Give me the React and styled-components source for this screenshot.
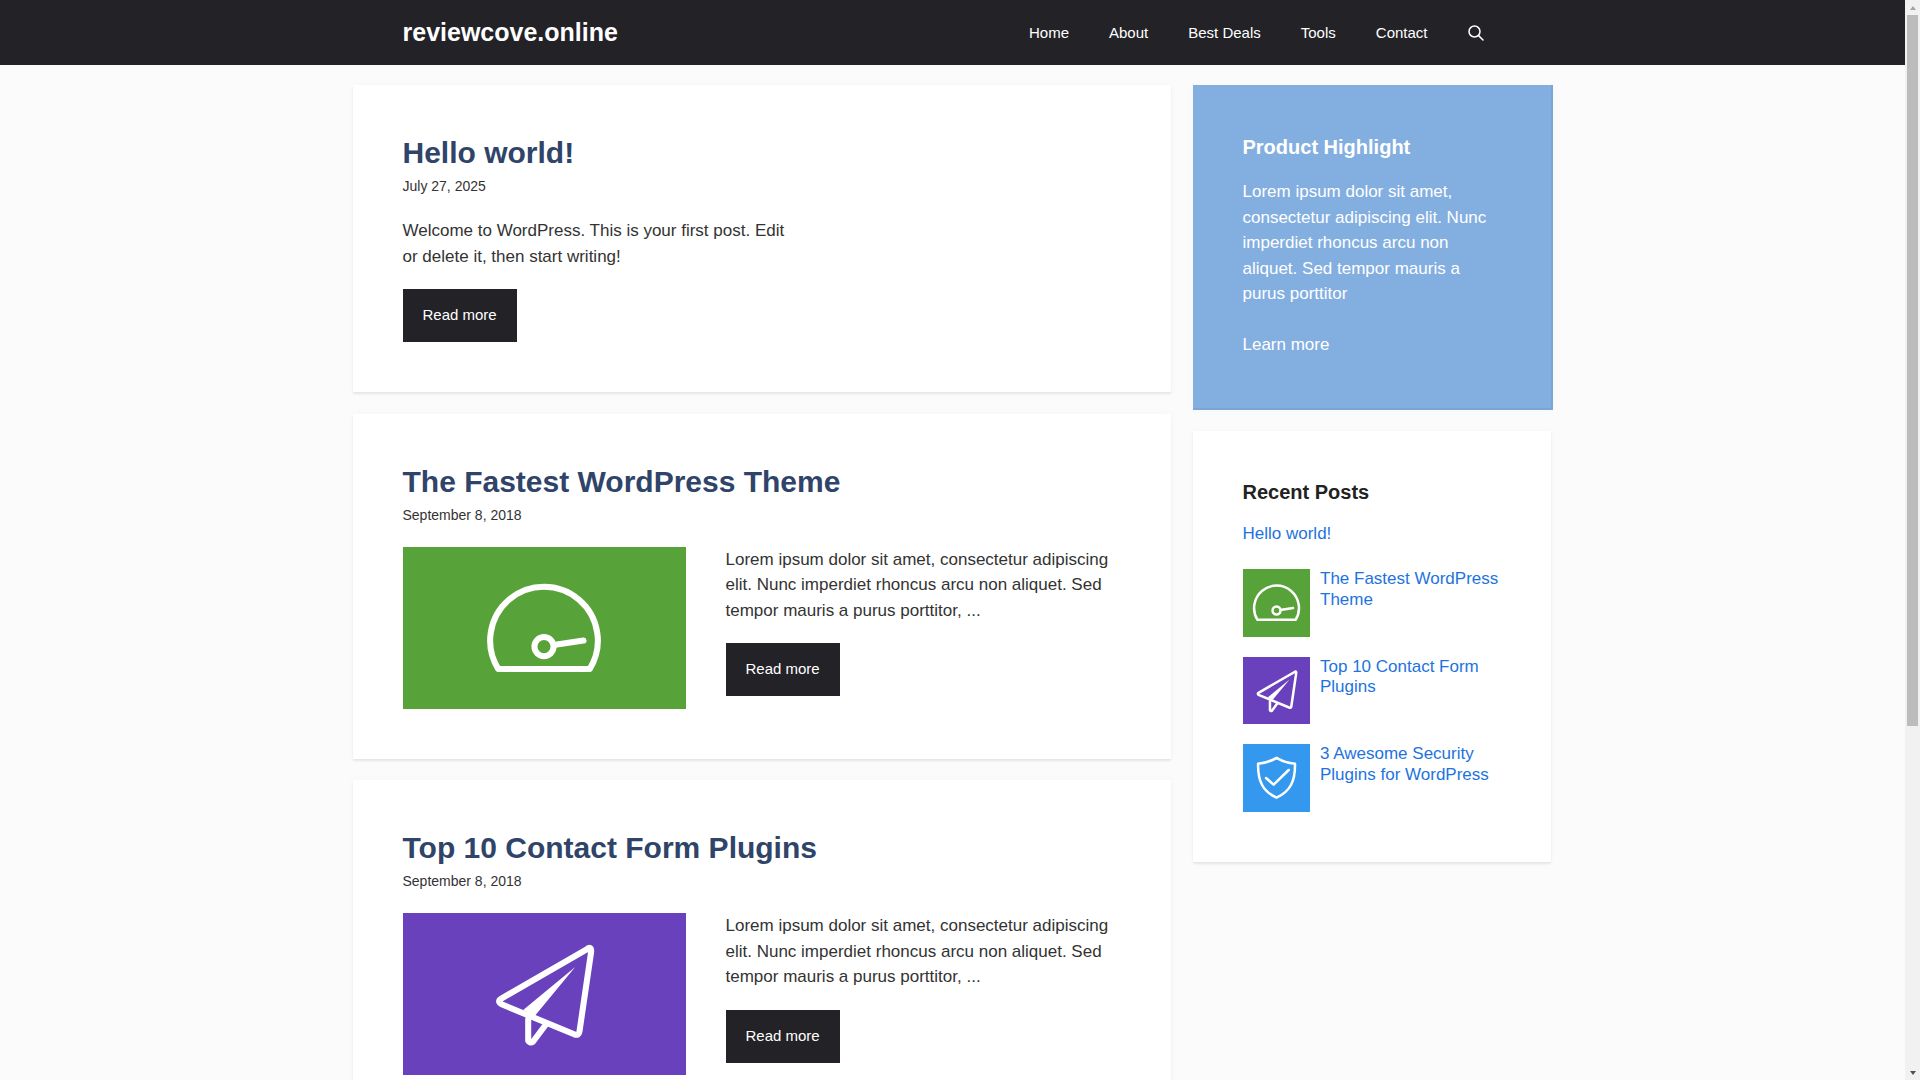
import * as React from "react";
import styled, { createGlobalStyle } from "styled-components";

const COLORS = {
    dark: "#222227",
    page: "#fbfbfb",
    text: "#333333",
    title: "#2f4468",
    link: "#1e73e0",
    highlight: "#83aee0",
};

const GlobalStyle = createGlobalStyle`
    html, body {
        height: 100%;
        overflow: hidden;
    }
    body {
        margin: 0;
        background: ${COLORS.page};
        color: ${COLORS.text};
        font-family: "Liberation Sans", Arial, sans-serif;
        font-size: 17px;
        line-height: 1.5;
    }
    * {
        box-sizing: border-box;
    }
`;

const Shell = styled.div`
    display: flex;
    height: 100vh;
`;

/*the browser's scrollbar is not photographed, so the page scrolls in here next to a drawn rail*/
const Scroller = styled.div`
    flex: 1;
    min-width: 0;
    overflow-y: auto;
    scrollbar-width: none;
`;

const ScrollRail = styled.div`
    flex: 0 0 15px;
    display: flex;
    flex-direction: column;
    background: #f1f1f1;
`;

const RailButton = styled.div`
    flex: 0 0 15px;
    display: flex;
    align-items: center;
    justify-content: center;
    &::before {
        content: "";
        border-left: 3.5px solid transparent;
        border-right: 3.5px solid transparent;
        border-${props => props.$down ? "top" : "bottom"}: 4px solid ${props => props.$down ? "#505050" : "#a3a3a3"};
    }
`;

const RailTrack = styled.div`
    flex: 1;
    padding: 0 2px;
`;

const RailThumb = styled.div`
    height: 711px;
    background: #bcbcbc;
`;

const Header = styled.header`
    height: 65px;
    background: ${COLORS.dark};
`;

const HeaderInner = styled.div`
    width: 1200px;
    height: 100%;
    margin: 0 auto;
    padding: 0 50px;
    display: flex;
    align-items: center;
    justify-content: space-between;
`;

const SiteTitle = styled.a`
    font-size: 25px;
    font-weight: 700;
    color: #fff;
    text-decoration: none;
`;

const Nav = styled.nav`
    display: flex;
    align-items: center;
    margin-right: -1px;
`;

const NavLink = styled.a`
    padding: 0 20px;
    font-size: 15px;
    line-height: 65px;
    color: #fff;
    text-decoration: none;
`;

const SearchButton = styled.span`
    display: flex;
    width: 56px;
    height: 65px;
    padding: 0 20px;
    align-items: center;
    justify-content: center;
`;

const Page = styled.div`
    width: 1200px;
    margin: 20px auto 0;
    display: flex;
    align-items: flex-start;
    gap: 20px;
`;

const Main = styled.main`
    width: 820px;
    display: flex;
    flex-direction: column;
    gap: 21.5px;
`;

const Card = styled.article`
    width: 818px;
    background: #fff;
    padding: 50px;
    box-shadow: 0 2px 2px rgba(0, 0, 0, 0.08), 0 0 10px rgba(0, 0, 0, 0.025);
`;

const PostTitle = styled.h2`
    margin: 0;
    font-size: 30px;
    font-weight: 700;
    line-height: 36px;
    color: ${COLORS.title};
`;

const PostDate = styled.div`
    margin: 5px 0 21px;
    font-size: 14px;
    line-height: 21px;
`;

const PostBody = styled.div`
    display: grid;
    grid-template-columns: 283px 397px;
    column-gap: 40px;
`;

const PlainBody = styled.div`
    width: 397px;
`;

const Thumb = styled.div`
    height: 162px;
    background: ${props => props.$color};
`;

const Excerpt = styled.p`
    margin: 0 0 20px;
`;

const ReadMore = styled.a`
    display: inline-block;
    padding: 14px 20px 16px;
    font-size: 15px;
    line-height: 23px;
    color: #fff;
    background: ${COLORS.dark};
    text-decoration: none;
`;

const Sidebar = styled.aside`
    width: 360px;
    display: flex;
    flex-direction: column;
    gap: 21px;
`;

const HighlightBox = styled.section`
    background: ${COLORS.highlight};
    color: #fff;
    padding: 50px 48px 50px 50px;
    border-right: 2px solid #7aa5d8;
    border-bottom: 2px solid #7aa5d8;
    box-shadow: 0 0 10px rgba(0, 0, 0, 0.025);
`;

const WidgetTitle = styled.h3`
    margin: 0 0 20px;
    font-size: 20px;
    font-weight: 700;
    line-height: 24px;
    color: ${props => props.$light ? "#fff" : "#222222"};
`;

const HighlightText = styled.p`
    margin: 0 0 25.5px;
`;

const HighlightLink = styled.a`
    display: block;
    color: #fff;
    text-decoration: none;
`;

const RecentBox = styled.section`
    width: 358px;
    background: #fff;
    padding: 49px 50px 50px;
    box-shadow: 0 2px 2px rgba(0, 0, 0, 0.08), 0 0 10px rgba(0, 0, 0, 0.025);
`;

const RecentList = styled.div`
    display: flex;
    flex-direction: column;
    gap: 20px;
`;

const RecentPlain = styled.a`
    display: block;
    margin-bottom: 25.4px;
    line-height: 1.2;
    color: ${COLORS.link};
    text-decoration: none;
`;

const RecentRow = styled.div`
    display: grid;
    grid-template-columns: 67.5px 1fr;
    column-gap: 10px;
`;

const RecentThumb = styled.div`
    height: 67.5px;
    background: ${props => props.$color};
`;

const RecentLink = styled.a`
    line-height: 1.2;
    color: ${COLORS.link};
    text-decoration: none;
`;

const Footer = styled.footer`
    margin-top: 20px;
    padding: 30px;
    height: 83px;
    background: ${COLORS.dark};
    color: #fff;
    font-size: 15px;
    text-align: center;
`;

const IconSvg = ({ children }) => (
    <svg width="100%" height="100%" viewBox="0 0 283 161" preserveAspectRatio="xMidYMid slice" style={{ display: "block" }}>
        {children}
    </svg>
);

const GaugeIcon = () => (
    <IconSvg>
        <g fill="none" stroke="#fff" strokeWidth="6" strokeLinecap="round" strokeLinejoin="round">
            <path d="M95.6 121.3A53.5 53.5 0 1 1 186.4 121.3Z" />
            <circle cx="141" cy="99" r="9.5" />
            <path d="M153.7 97L180.3 93" />
        </g>
    </IconSvg>
);

const PlaneIcon = () => (
    <IconSvg>
        <g fill="none" stroke="#fff" strokeWidth="6" strokeLinecap="round" strokeLinejoin="round">
            <path d="M183 36.3L99 84.8Q93.5 88 99.5 91L171 120.5Q175.5 122.5 176.3 117.5L187.8 39Q188.5 32 183 36.3Z" />
            <path d="M125.3 105.3V127Q127 130 130 128L142.7 111" />
        </g>
        <path d="M172 53.7L120.3 96.3L132 102Z" fill="#fff" />
    </IconSvg>
);

const ShieldIcon = () => (
    <IconSvg>
        <g fill="none" stroke="#fff" strokeWidth="6" strokeLinecap="round" strokeLinejoin="round">
            <path d="M141 33C126 42 112 46 97 47C96 88 108 113 141 128C174 113 186 88 185 47C170 46 156 42 141 33Z" />
            <path d="M116 81L134 97L170 62" />
        </g>
    </IconSvg>
);

const SearchIcon = () => (
    <svg width="16" height="16" viewBox="0 0 16 16" fill="none" stroke="#fff" strokeWidth="1.5" strokeLinecap="round" style={{ flexShrink: 0 }}>
        <circle cx="6.5" cy="6.5" r="5.5" />
        <path d="M10.6 10.6L15 15" />
    </svg>
);

const LOREM = "Lorem ipsum dolor sit amet, consectetur adipiscing elit. Nunc imperdiet rhoncus arcu non aliquet. Sed tempor mauris a purus porttitor, ...";

const POSTS = [
    { title: "The Fastest WordPress Theme", date: "September 8, 2018", color: "#57a339", Icon: GaugeIcon },
    { title: "Top 10 Contact Form Plugins", date: "September 8, 2018", color: "#6941bc", Icon: PlaneIcon },
    { title: "3 Awesome Security Plugins for WordPress", date: "September 8, 2018", color: "#3498ee", Icon: ShieldIcon },
];

const NAV_ITEMS = ["Home", "About", "Best Deals", "Tools", "Contact"];

const App = () => (
    <Shell>
        <GlobalStyle />
        <Scroller>
            <Header>
                <HeaderInner>
                    <SiteTitle href="#">reviewcove.online</SiteTitle>
                    <Nav>
                        {NAV_ITEMS.map(item => <NavLink href="#" key={item}>{item}</NavLink>)}
                        <SearchButton><SearchIcon /></SearchButton>
                    </Nav>
                </HeaderInner>
            </Header>
            <Page>
                <Main>
                    <Card>
                        <PostTitle>Hello world!</PostTitle>
                        <PostDate>July 27, 2025</PostDate>
                        <PlainBody>
                            <Excerpt>Welcome to WordPress. This is your first post. Edit or delete it, then start writing!</Excerpt>
                            <ReadMore href="#">Read more</ReadMore>
                        </PlainBody>
                    </Card>
                    {POSTS.map(({ title, date, color, Icon }) => (
                        <Card key={title}>
                            <PostTitle>{title}</PostTitle>
                            <PostDate>{date}</PostDate>
                            <PostBody>
                                <Thumb $color={color}><Icon /></Thumb>
                                <div>
                                    <Excerpt>{LOREM}</Excerpt>
                                    <ReadMore href="#">Read more</ReadMore>
                                </div>
                            </PostBody>
                        </Card>
                    ))}
                </Main>
                <Sidebar>
                    <HighlightBox>
                        <WidgetTitle $light>Product Highlight</WidgetTitle>
                        <HighlightText>Lorem ipsum dolor sit amet, consectetur adipiscing elit. Nunc imperdiet rhoncus arcu non aliquet. Sed tempor mauris a purus porttitor</HighlightText>
                        <HighlightLink href="#">Learn more</HighlightLink>
                    </HighlightBox>
                    <RecentBox>
                        <WidgetTitle>Recent Posts</WidgetTitle>
                        <RecentPlain href="#">Hello world!</RecentPlain>
                        <RecentList>
                            {POSTS.map(({ title, color, Icon }) => (
                                <RecentRow key={title}>
                                    <RecentThumb $color={color}><Icon /></RecentThumb>
                                    <RecentLink href="#">{title}</RecentLink>
                                </RecentRow>
                            ))}
                        </RecentList>
                    </RecentBox>
                </Sidebar>
            </Page>
            <Footer>© 2025 reviewcove.online</Footer>
        </Scroller>
        <ScrollRail>
            <RailButton />
            <RailTrack><RailThumb /></RailTrack>
            <RailButton $down />
        </ScrollRail>
    </Shell>
);

export default App;
